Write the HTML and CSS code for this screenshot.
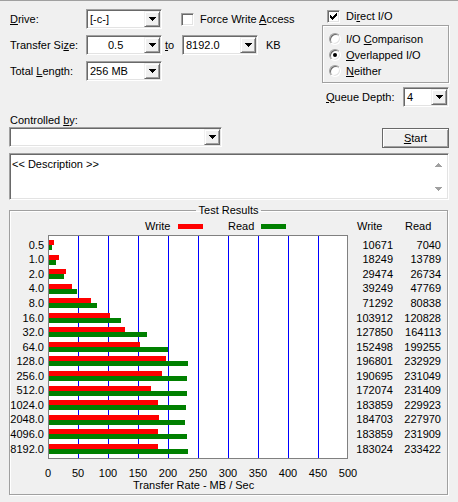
FILE: index.html
```html
<!DOCTYPE html>
<html>
<head>
<meta charset="utf-8">
<link rel="stylesheet" href="styles.css">
</head>
<body>
<div class="win">
  <div class="top">
    <div class="left">
      <div class="row">
        <span class="lbl"><u>D</u>rive:</span>
        <div class="combo w76"><span class="val">[-c-]</span><span class="btn"><svg width="7" height="4" viewBox="0 0 7 4"><path d="M0 0h7v1H0zM1 1h5v1H1zM2 2h3v1H2zM3 3h1v1H3z" fill="#000"/></svg></span></div>
        <div class="chk force"><span class="box"></span><span>Force Write <u>A</u>ccess</span></div>
      </div>
      <div class="row">
        <span class="lbl">Transfer Si<u>z</u>e:</span>
        <div class="combo w76"><span class="val mid">0.5</span><span class="btn"><svg width="7" height="4" viewBox="0 0 7 4"><path d="M0 0h7v1H0zM1 1h5v1H1zM2 2h3v1H2zM3 3h1v1H3z" fill="#000"/></svg></span></div>
        <span class="to"><u>t</u>o</span>
        <div class="combo w76"><span class="val">8192.0</span><span class="btn"><svg width="7" height="4" viewBox="0 0 7 4"><path d="M0 0h7v1H0zM1 1h5v1H1zM2 2h3v1H2zM3 3h1v1H3z" fill="#000"/></svg></span></div>
        <span class="kb">KB</span>
      </div>
      <div class="row">
        <span class="lbl">Total <u>L</u>ength:</span>
        <div class="combo w76"><span class="val">256 MB</span><span class="btn"><svg width="7" height="4" viewBox="0 0 7 4"><path d="M0 0h7v1H0zM1 1h5v1H1zM2 2h3v1H2zM3 3h1v1H3z" fill="#000"/></svg></span></div>
      </div>
    </div>
    <div class="right">
      <div class="chk direct"><span class="box"><svg width="7" height="7" viewBox="0 0 7 7"><path d="M6 0h1v3H6zM5 1h1v3H5zM4 2h1v3H4zM3 3h1v3H3zM2 4h1v3H2zM1 3h1v3H1zM0 2h1v3H0z" fill="#000"/></svg></span><span>Di<u>r</u>ect I/O</span></div>
      <div class="iogroup">
        <div class="radio"><span class="rad"></span><span>I/O <u>C</u>omparison</span></div>
        <div class="radio"><span class="rad on"></span><span><u>O</u>verlapped I/O</span></div>
        <div class="radio"><span class="rad"></span><span><u>N</u>either</span></div>
      </div>
      <div class="queue">
        <span><u>Q</u>ueue Depth:</span>
        <div class="combo w46"><span class="val">4</span><span class="btn"><svg width="7" height="4" viewBox="0 0 7 4"><path d="M0 0h7v1H0zM1 1h5v1H1zM2 2h3v1H2zM3 3h1v1H3z" fill="#000"/></svg></span></div>
      </div>
    </div>
  </div>

  <div class="ctl-label">Controlled <u>b</u>y:</div>
  <div class="ctl-row">
    <div class="combo w213"><span class="val"></span><span class="btn"><svg width="7" height="4" viewBox="0 0 7 4"><path d="M0 0h7v1H0zM1 1h5v1H1zM2 2h3v1H2zM3 3h1v1H3z" fill="#000"/></svg></span></div>
    <div class="start"><span><u>S</u>tart</span></div>
  </div>

  <div class="desc">
    <div class="txt">&lt;&lt; Description &gt;&gt;</div>
    <div class="sb">
      <svg width="7" height="4" viewBox="0 0 7 4"><path d="M3 0h1v1H3zM2 1h3v1H2zM1 2h5v1H1zM0 3h7v1H0z" fill="#a0a0a0"/></svg>
      <svg width="7" height="4" viewBox="0 0 7 4"><path d="M0 0h7v1H0zM1 1h5v1H1zM2 2h3v1H2zM3 3h1v1H3z" fill="#a0a0a0"/></svg>
    </div>
  </div>

  <fieldset class="results">
    <legend>Test Results</legend>
    <div class="legendrow">
      <span class="lg-w">Write</span><span class="sw red"></span>
      <span class="lg-r">Read</span><span class="sw green"></span>
      <span class="hd-w">Write</span><span class="hd-r">Read</span>
    </div>
    <div class="chartrow">
      <div class="ylabels">
        <div class="lrow">0.5</div><div class="lrow">1.0</div><div class="lrow">2.0</div><div class="lrow">4.0</div><div class="lrow">8.0</div>
        <div class="lrow">16.0</div><div class="lrow">32.0</div><div class="lrow">64.0</div><div class="lrow">128.0</div><div class="lrow">256.0</div>
        <div class="lrow">512.0</div><div class="lrow">1024.0</div><div class="lrow">2048.0</div><div class="lrow">4096.0</div><div class="lrow">8192.0</div>
      </div>
      <div class="chart">
        <div class="brow"><div class="bw" style="width:5.4px"></div><div class="br" style="width:3.2px"></div></div>
        <div class="brow"><div class="bw" style="width:10px"></div><div class="br" style="width:7.3px"></div></div>
        <div class="brow"><div class="bw" style="width:16.7px"></div><div class="br" style="width:15px"></div></div>
        <div class="brow"><div class="bw" style="width:22.5px"></div><div class="br" style="width:27.7px"></div></div>
        <div class="brow"><div class="bw" style="width:41.8px"></div><div class="br" style="width:47.5px"></div></div>
        <div class="brow"><div class="bw" style="width:61.3px"></div><div class="br" style="width:71.5px"></div></div>
        <div class="brow"><div class="bw" style="width:75.7px"></div><div class="br" style="width:97.5px"></div></div>
        <div class="brow"><div class="bw" style="width:90.5px"></div><div class="br" style="width:118.6px"></div></div>
        <div class="brow"><div class="bw" style="width:117.1px"></div><div class="br" style="width:138.8px"></div></div>
        <div class="brow"><div class="bw" style="width:113.4px"></div><div class="br" style="width:137.6px"></div></div>
        <div class="brow"><div class="bw" style="width:102.2px"></div><div class="br" style="width:137.8px"></div></div>
        <div class="brow"><div class="bw" style="width:109.3px"></div><div class="br" style="width:137px"></div></div>
        <div class="brow"><div class="bw" style="width:109.8px"></div><div class="br" style="width:135.8px"></div></div>
        <div class="brow"><div class="bw" style="width:109.3px"></div><div class="br" style="width:138.1px"></div></div>
        <div class="brow"><div class="bw" style="width:108.8px"></div><div class="br" style="width:139.1px"></div></div>
      </div>
      <div class="vcol wcol">
        <div class="lrow">10671</div><div class="lrow">18249</div><div class="lrow">29474</div><div class="lrow">39249</div><div class="lrow">71292</div>
        <div class="lrow">103912</div><div class="lrow">127850</div><div class="lrow">152498</div><div class="lrow">196801</div><div class="lrow">190695</div>
        <div class="lrow">172074</div><div class="lrow">183859</div><div class="lrow">184703</div><div class="lrow">183859</div><div class="lrow">183024</div>
      </div>
      <div class="vcol rcol">
        <div class="lrow">7040</div><div class="lrow">13789</div><div class="lrow">26734</div><div class="lrow">47769</div><div class="lrow">80838</div>
        <div class="lrow">120828</div><div class="lrow">164113</div><div class="lrow">199255</div><div class="lrow">232929</div><div class="lrow">231049</div>
        <div class="lrow">231409</div><div class="lrow">229923</div><div class="lrow">227970</div><div class="lrow">231909</div><div class="lrow">233422</div>
      </div>
    </div>
    <div class="axis">
      <span>0</span><span>50</span><span>100</span><span>150</span><span>200</span><span>250</span><span>300</span><span>350</span><span>400</span><span>450</span><span>500</span>
    </div>
    <div class="axis-title">Transfer Rate - MB / Sec</div>
  </fieldset>
</div>
</body>
</html>
```

FILE: styles.css
```css
* { box-sizing: border-box; }
html, body { margin: 0; padding: 0; }
body {
  width: 458px;
  height: 502px;
  overflow: hidden;
  background: #f0f0f0;
  color: #000;
  font-family: "Liberation Sans", Arial, sans-serif;
  font-size: 11px;
  line-height: 13px;
}
u { text-decoration: underline; text-underline-offset: 1px; }

.win { height: 502px; border-top: 1px solid #a0a0a0; }

/* top area */
.top { display: flex; padding-top: 8px; }
.left { width: 322px; padding-left: 10px; }
.row { display: flex; align-items: center; height: 20px; }
.row + .row { margin-top: 6px; }
.lbl { width: 76px; }

.combo {
  display: flex;
  height: 20px;
  padding: 1px;
  background: #fff;
  border: 1px solid;
  border-color: #a0a0a0 #fff #fff #a0a0a0;
  box-shadow: inset 1px 1px #696969, inset -1px -1px #e3e3e3;
}
.combo .val { flex: 1; padding-left: 2px; line-height: 16px; white-space: nowrap; overflow: hidden; }
.combo .val.mid { padding-left: 20px; }
.combo .btn {
  width: 16px;
  height: 16px;
  display: flex;
  align-items: center;
  justify-content: center;
  background: #f0f0f0;
  border: 1px solid;
  border-color: #f0f0f0 #696969 #696969 #f0f0f0;
  box-shadow: inset 1px 1px #fff, inset -1px -1px #a0a0a0;
}
.combo .btn svg { display: block; }
.w76 { width: 76px; }
.w46 { width: 46px; }
.w213 { width: 213px; }

.to { width: 17px; margin-left: 3px; }
.kb { margin-left: 8px; }

.chk { display: flex; align-items: center; }
.force { margin-left: 19px; }
.box {
  width: 13px;
  height: 13px;
  margin-right: 6px;
  display: flex;
  align-items: center;
  justify-content: center;
  background: #fff;
  border: 1px solid;
  border-color: #a0a0a0 #fff #fff #a0a0a0;
  box-shadow: inset 1px 1px #696969, inset -1px -1px #e3e3e3;
}
.box svg { display: block; }

.right { width: 127px; }
.direct { height: 14px; padding-left: 5px; }
.iogroup {
  margin-top: 2px;
  height: 58px;
  padding: 5px 0 0 6px;
  border: 1px solid #a0a0a0;
  box-shadow: inset 1px 1px #fff, 1px 1px #fff;
}
.radio { display: flex; align-items: center; height: 16px; }
.rad {
  width: 12px;
  height: 12px;
  margin-right: 5px;
  border-radius: 50%;
  background: #fff;
  border: 1px solid;
  border-color: #a0a0a0 #fff #fff #a0a0a0;
  box-shadow: inset 1px 1px #696969, inset -1px -1px #e3e3e3;
  display: flex;
  align-items: center;
  justify-content: center;
}
.rad.on::after {
  content: "";
  width: 4px;
  height: 4px;
  border-radius: 50%;
  background: #000;
}
.queue {
  margin-top: 4px;
  padding-left: 4px;
  display: flex;
  align-items: center;
  justify-content: space-between;
}

/* controlled by */
.ctl-label { margin: 7px 0 0 10px; line-height: 13px; }
.ctl-row { display: flex; justify-content: space-between; padding: 0 9px; }
.start {
  width: 67px;
  height: 20px;
  margin-top: 1px;
  display: flex;
  align-items: center;
  justify-content: center;
  background: #f0f0f0;
  border: 1px solid #696969;
  box-shadow: inset 1px 1px #fff, inset -1px -1px #a0a0a0;
}

/* description */
.desc {
  display: flex;
  height: 47px;
  margin: 5px 9px 0;
  background: #fff;
  border: 1px solid;
  border-color: #a0a0a0 #fff #fff #a0a0a0;
  box-shadow: inset 1px 1px #696969, inset -1px -1px #e3e3e3;
  padding: 1px;
}
.desc .txt { flex: 1; padding: 3px 0 0 1px; line-height: 13px; }
.desc .sb {
  width: 17px;
  display: flex;
  flex-direction: column;
  justify-content: space-between;
  align-items: center;
  padding: 8px 0 7px;
}
.desc .sb svg { display: block; }

/* results group */
.results {
  margin: 4px 10px 0 9px;
  padding: 0;
  min-width: 0;
  height: 291px;
  border: 1px solid #a0a0a0;
  box-shadow: inset 1px 1px #fff, 1px 1px #fff;
}
.results legend {
  margin: 0 auto;
  padding: 0 3px;
  line-height: 13px;
}
.legendrow {
  display: flex;
  align-items: center;
  height: 14px;
  margin-top: 2px;
}
.lg-w { margin-left: 135px; width: 33px; }
.lg-r { margin-left: 25px; width: 33px; }
.sw { width: 25px; height: 5px; }
.red { background: #ff0000; }
.green { background: #008000; }
.hd-w { margin-left: 71px; width: 48px; }
.hd-r { width: 30px; }

.chartrow { display: flex; margin-top: 2px; }
.ylabels { width: 34px; margin-right: 4px; padding-top: 2.7px; text-align: right; }
.lrow { height: 14.57px; line-height: 14.57px; white-space: nowrap; }
.chart {
  width: 300px;
  height: 224px;
  padding-top: 1.7px;
  border: 1px solid #808080;
  background: #fff repeating-linear-gradient(to right, transparent 0 29px, #0000ff 29px 30px);
}
.brow { height: 14.57px; display: flex; flex-direction: column; justify-content: center; }
.bw { height: 5px; background: #ff0000; }
.br { height: 5px; background: #008000; }
.vcol { padding-top: 2.7px; text-align: right; }
.wcol { width: 45px; }
.rcol { width: 48px; }

.axis { display: flex; margin: 8.5px 0 0 23px; }
.axis span { width: 30px; text-align: center; line-height: 11px; }
.axis-title { margin-left: 123px; line-height: 12px; }
```
